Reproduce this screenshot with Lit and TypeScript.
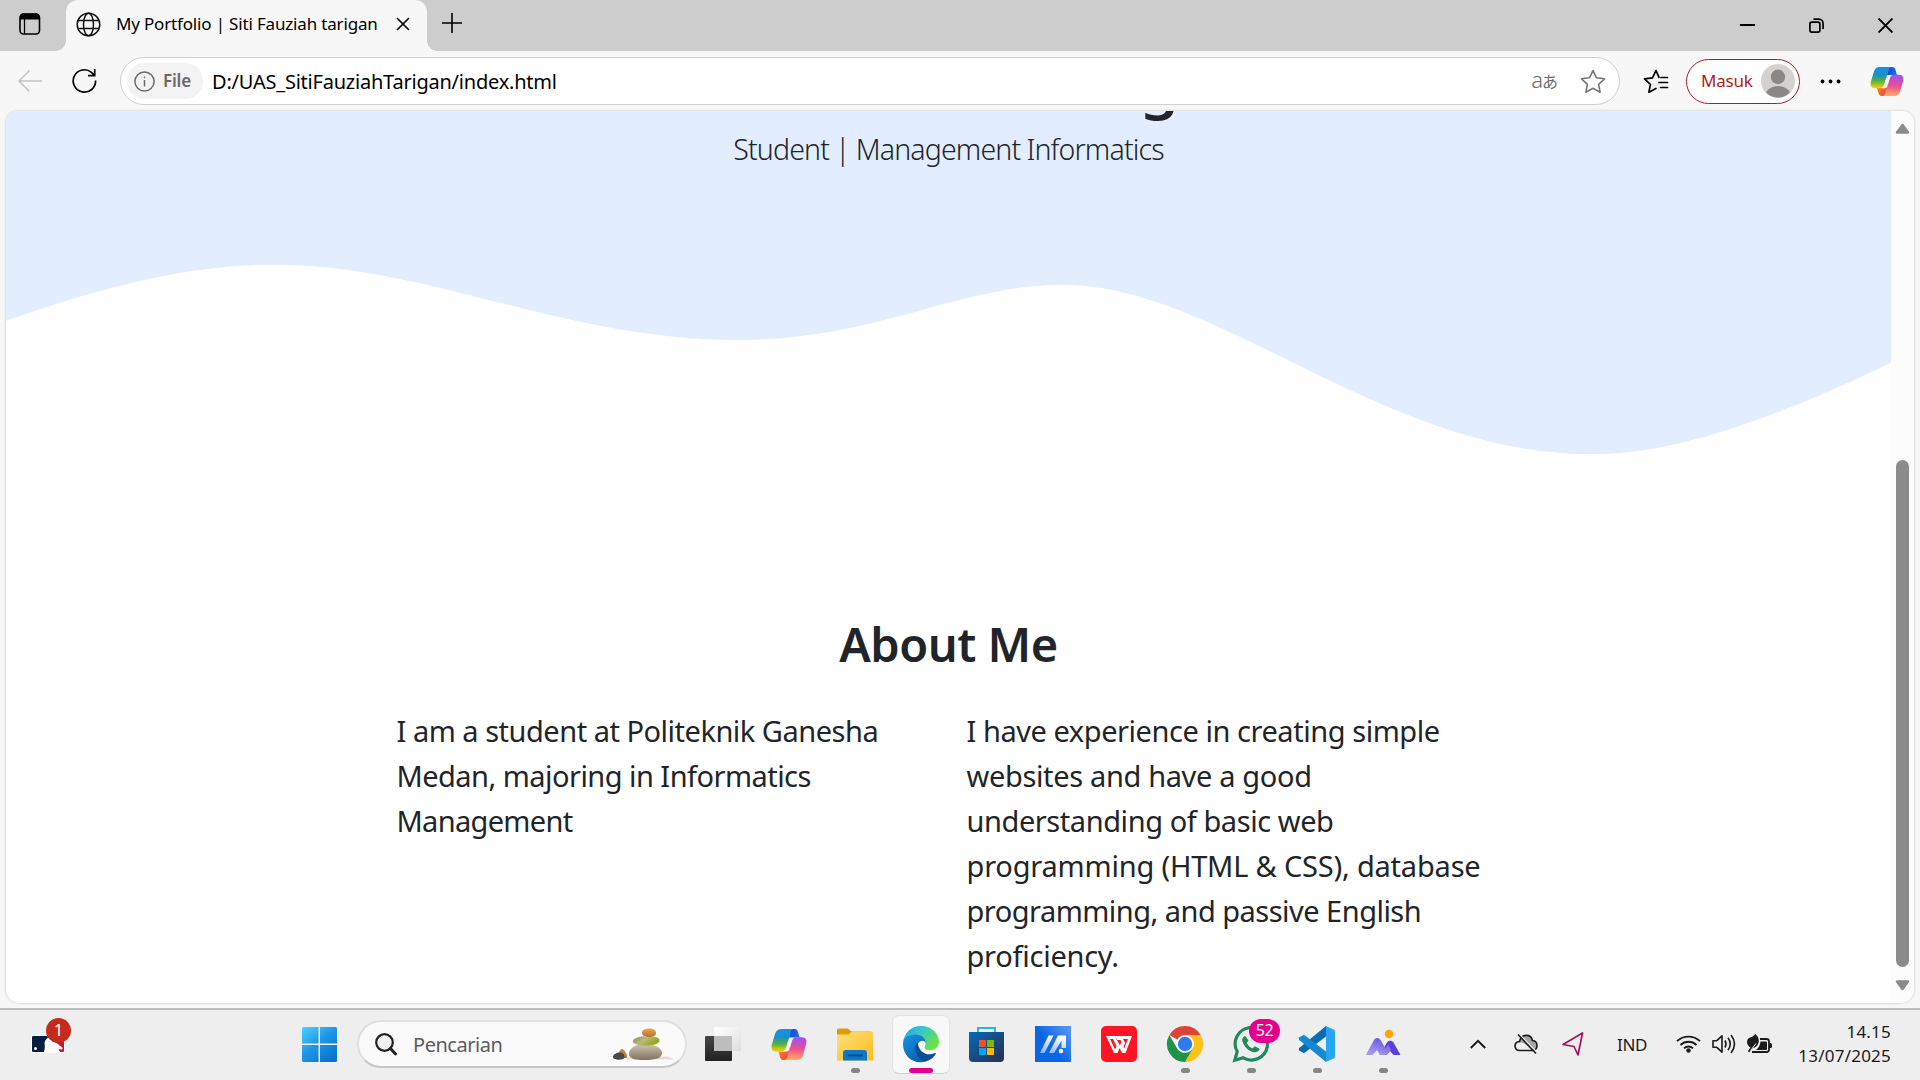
import { LitElement, html, css, svg } from "lit";
import { customElement } from "lit/decorators.js";

const BIO_LEFT: [string, number][] = [
  ["I am a student at Politeknik Ganesha", -0.49],
  ["Medan, majoring in Informatics", -0.54],
  ["Management", -0.69],
];
const BIO_RIGHT: [string, number][] = [
  ["I have experience in creating simple", -0.45],
  ["websites and have a good", -0.35],
  ["understanding of basic web", -0.43],
  ["programming (HTML & CSS), database", -0.2],
  ["programming, and passive English", -0.52],
  ["proficiency.", -0.25],
];

const copilot = (id: string) => svg`
  <defs>
    <linearGradient id="${id}a" x1="0" y1="0" x2="0" y2="1"><stop offset="0" stop-color="#1b8fe8"/><stop offset=".35" stop-color="#1590cf"/><stop offset=".65" stop-color="#52b03f"/><stop offset="1" stop-color="#ffd400"/></linearGradient>
    <linearGradient id="${id}b" x1="0.3" y1="0" x2="0.2" y2="1"><stop offset="0" stop-color="#a44ff0"/><stop offset=".5" stop-color="#ee4f8e"/><stop offset="1" stop-color="#ffb35c"/></linearGradient>
    <linearGradient id="${id}c" x1="0" y1="0" x2="1" y2="0.4"><stop offset="0" stop-color="#1a3fd0"/><stop offset="1" stop-color="#1c6fe0"/></linearGradient>
    <linearGradient id="${id}d" x1="0" y1="0" x2="1" y2="1"><stop offset="0" stop-color="#ff8a3c"/><stop offset="1" stop-color="#e83e2e"/></linearGradient>
  </defs>
  <path d="M20 1h3.500c2 0 3 1.300 3.500 3l1.600 5.500H24c-2 0-3.200 1-3.800 3L17 13z" fill="url(#${id}c)"/>
  <path d="M16 32h-3.500c-2 0-3-1.300-3.500-3l-1.600-5.500H12c2 0 3.200-1 3.800-3L19 20z" fill="url(#${id}d)"/>
  <path d="M10.500 1h12.300c-1.800.3-2.700 1.700-3.300 3.800l-4.400 15c-.7 2.400-2 3.900-4.400 3.900H5c-3.800 0-5.300-2.900-4.100-7.100l3.200-10.800C5.100 2.500 7.200 1 10.500 1z" fill="url(#${id}a)"/>
  <path d="M25.500 32H13.200c1.800-.3 2.700-1.700 3.300-3.800l4.400-15c.7-2.400 2-3.900 4.400-3.900H31c3.800 0 5.300 2.900 4.100 7.100l-3.200 10.800c-1 3.300-3.100 4.800-6.400 4.800z" fill="url(#${id}b)"/>
  <path d="M18.300 9.500h5.200c-1.500.5-2.200 1.700-2.700 3.300l-2.600 8.800c-.4 1.300-1 2-2.300 2h-4.200c1.500-.5 2.700-1.700 3.200-3.300z" fill="#f4f4f6"/>`;

@customElement("browser-tabs")
class BrowserTabs extends LitElement {
  static styles = css`
    :host { display: flex; height: 51px; background: #cdcdcd; color: #000; }
    svg { display: block; flex: none; }
    .work { padding: 13px 25px 0 19px; }
    .tab { position: relative; display: flex; align-items: center; width: 361px; height: 51px; box-sizing: border-box; padding: 0 17px 3px 10px; background: #f7f7f7; border-radius: 12px 12px 0 0; }
    .tab::before, .tab::after { content: ""; position: absolute; bottom: 0; width: 10px; height: 10px; }
    .tab::before { left: -10px; background: radial-gradient(circle at 0 0, transparent 9.500px, #f7f7f7 10px); }
    .tab::after { right: -10px; background: radial-gradient(circle at 100% 0, transparent 9.500px, #f7f7f7 10px); }
    .title { margin: 0 0 2px 15px; flex: 1; font-size: 17px; letter-spacing: -0.17px; white-space: nowrap; }
    .plus { padding: 12px 0 0 14px; flex: 1; }
    .win { display: flex; gap: 54px; padding: 18px 27px 0 0; }
  `;
  render() {
    return html`
      <div class="work"><svg width="22" height="22" viewBox="0 0 22 22"><rect x="1" y="1" width="19.500" height="20" rx="3.500" fill="none" stroke="#000" stroke-width="1.600"/><path d="M1 6.500V4a3.500 3.500 0 0 1 3.500-3.500h12.500A3.500 3.500 0 0 1 20.500 4v2.500z"/><path d="M5.500 6v15" stroke="#000" stroke-width="1.300"/></svg></div>
      <div class="tab">
        <svg width="25" height="25" viewBox="0 0 25 25" fill="none" stroke="#111" stroke-width="1.500"><circle cx="12.500" cy="12.500" r="11.300"/><ellipse cx="12.500" cy="12.500" rx="5" ry="11.300"/><path d="M2.200 8.500h20.600M2.200 16.500h20.600"/></svg>
        <span class="title">My Portfolio | Siti Fauziah tarigan</span>
        <svg width="14" height="14" viewBox="0 0 14 14" stroke="#000" stroke-width="1.600"><path d="M1 1l12 12M13 1L1 13"/></svg>
      </div>
      <div class="plus"><svg width="22" height="22" viewBox="0 0 22 22" stroke="#000" stroke-width="1.600"><path d="M11 1v20M1 11h20"/></svg></div>
      <div class="win">
        <svg width="15" height="15" viewBox="0 0 15 15" stroke="#000" stroke-width="2"><path d="M0 7h15"/></svg>
        <svg width="15" height="15" viewBox="0 0 15 15" fill="none" stroke="#000" stroke-width="1.700"><rect x=".9" y="4.200" width="10" height="10" rx="2"/><path d="M4.500 1.200h5.300a4.300 4.300 0 0 1 4.300 4.300v5.500"/></svg>
        <svg width="15" height="15" viewBox="0 0 15 15" stroke="#000" stroke-width="1.900"><path d="M.5 .5l14 14M14.500 .5l-14 14"/></svg>
      </div>`;
  }
}

@customElement("address-bar")
class AddressBar extends LitElement {
  static styles = css`
    :host { display: flex; height: 60px; box-sizing: border-box; align-items: center; padding: 0 16px 0 17px; background: #f7f7f7; }
    svg { display: block; flex: none; }
    .reload { margin: 0 23px 0 29px; }
    .bar { display: flex; align-items: center; width: 1500px; height: 48px; box-sizing: border-box; border: 1.500px solid #d0d0d0; border-radius: 24px; background: #fff; padding: 0 13px 0 6px; flex: none; }
    .chip { display: flex; align-items: center; gap: 8px; width: 76px; height: 36px; box-sizing: border-box; padding-left: 7px; border-radius: 18px; background: #f3f3f3; color: #6a6a6a; font-size: 17px; font-weight: 600; letter-spacing: -0.2px; }
    .chip span { margin-bottom: 1px; }
    .url { flex: 1; margin-left: 9px; font-size: 20px; letter-spacing: -0.22px; color: #000; }
    .lang { font-size: 22px; line-height: 24px; font-weight: 300; color: #6a6a6a; display: flex; align-items: center; margin: 0 22px 4px 0; }
    .kana { font-size: 16px; font-weight: 400; font-family: "Noto Sans CJK JP", sans-serif; margin-top: 3px; margin-left: -1px; }
    .fav { margin: 0 17px 0 23px; }
    .login { display: flex; align-items: center; justify-content: space-between; width: 114px; height: 45px; box-sizing: border-box; border: 1.500px solid #b01b22; border-radius: 23px; padding: 0 4px 0 14px; background: #fff; color: #b01b22; font-size: 17px; letter-spacing: -0.2px; }
    .login span { margin-bottom: 2px; }
    .dots { margin: 0 29px 0 20px; }
  `;
  render() {
    return html`
      <svg width="26" height="24" viewBox="0 0 26 24" fill="none" stroke="#c4c4c4" stroke-width="1.500"><path d="M25 12H2M12.500 1.500L2 12l10.500 10.500"/></svg>
      <svg class="reload" width="25" height="26" viewBox="0 0 25 26" fill="none" stroke="#000" stroke-width="1.700"><path d="M23.600 12.500A11.200 11.200 0 1 1 19.500 4.300l3 3M22.700 1v6.700H16"/></svg>
      <div class="bar">
        <div class="chip">
          <svg width="21" height="21" viewBox="0 0 21 21" fill="none" stroke="#6a6a6a" stroke-width="1.500"><circle cx="10.500" cy="10.500" r="9.600"/><path d="M10.500 9v6.500"/><circle cx="10.500" cy="6.300" r=".6" fill="#6a6a6a" stroke-width=".6"/></svg>
          <span>File</span>
        </div>
        <span class="url">D:/UAS_SitiFauziahTarigan/index.html</span>
        <span class="lang">a<span class="kana">あ</span></span>
        <svg width="26" height="25" viewBox="0 0 26 25" fill="none" stroke="#767676" stroke-width="1.600" stroke-linejoin="round"><path d="M13 1.500l3.500 7.300 8 1-5.900 5.500 1.500 7.900-7.100-3.900-7.100 3.900 1.500-7.900L1.500 9.800l8-1z"/></svg>
      </div>
      <svg class="fav" width="26" height="25" viewBox="0 0 26 25" fill="none" stroke="#000" stroke-width="1.700" stroke-linejoin="round" stroke-linecap="round"><path d="M16 8.300L13 1.500 9.500 8.800l-8 1 5.900 5.500-1.500 7.900 7-3.800M18 8.500h6.500M16 13.500h8.500M17.500 18.500h7"/></svg>
      <div class="login"><span>Masuk</span>
        <svg width="34" height="34" viewBox="0 0 34 34"><defs><clipPath id="av"><circle cx="17" cy="17" r="16.500"/></clipPath></defs><circle cx="17" cy="17" r="17" fill="#d4d2d0"/><circle cx="17" cy="12.800" r="7.200" fill="#8b8785"/><ellipse cx="17" cy="31" rx="12.500" ry="9" fill="#8b8785" clip-path="url(#av)"/></svg>
      </div>
      <svg class="dots" width="21" height="5" viewBox="0 0 21 5"><circle cx="2.500" cy="2.500" r="1.900"/><circle cx="10.500" cy="2.500" r="1.900"/><circle cx="18.500" cy="2.500" r="1.900"/></svg>
      <svg width="34" height="31" viewBox="0 0 36 33">${copilot("t")}</svg>`;
  }
}

@customElement("portfolio-page")
class PortfolioPage extends LitElement {
  static styles = css`
    :host { display: flex; height: 892px; margin: 0 6px; overflow: hidden; border-radius: 12px 12px 14px 14px; background: #fff; box-shadow: 0 0 2px 1px #dedede; color: #212529; }
    .page { width: 1885px; overflow: hidden; }
    .hero { background: #e2edff; text-align: center; }
    h1, h2, p { margin: 0; }
    h1 { font-size: 64px; line-height: 72px; font-weight: 500; margin-top: -65px; letter-spacing: 1px; padding-left: 10px; }
    .lead { font-size: 28.500px; line-height: 42px; height: 122px; font-weight: 310; letter-spacing: -0.85px; padding-top: 10px; box-sizing: border-box; word-spacing: -0.5px; }
    .wave { display: block; width: 1885px; height: 230px; }
    .about { padding-top: 145px; }
    h2 { font-size: 47px; line-height: 58px; font-weight: 590; letter-spacing: -0.5px; text-align: center; }
    .cols { display: grid; grid-template-columns: 570px 570px; width: 1140px; margin: 35px auto 0; }
    p { padding: 0 18px; font-size: 29px; line-height: 45px; font-weight: 375; }
    .line { display: block; white-space: nowrap; }
    .scroll { display: flex; flex-direction: column; align-items: center; width: 23px; background: #fcfcfc; padding: 12px 0; box-sizing: border-box; }
    .track { flex: 1; display: flex; align-items: flex-end; padding-bottom: 13px; }
    .thumb { width: 13px; height: 507px; border-radius: 7px; background: #8b8b8b; }
    .scroll svg { display: block; }
  `;
  private lines(rows: [string, number][]) {
    return html`<p>${rows.map(([text, tracking]) => html`<span class="line" style="letter-spacing:${tracking}px">${text}</span>`)}</p>`;
  }
  render() {
    return html`
      <div class="page">
        <div class="hero">
          <h1>Siti Fauziah Tarigan</h1>
          <div class="lead">Student | Management Informatics</div>
          <svg class="wave" viewBox="5 0 1539 690" preserveAspectRatio="none"><path fill="#fff" d="M5 242C80 147 150 74 225 74C350 74 459 300 602 300C716 300 782 134 868 134C995 134 1128 643 1300 643C1375 643 1464 508 1544 368V691H5z"/></svg>
        </div>
        <div class="about">
          <h2>About Me</h2>
          <div class="cols">${this.lines(BIO_LEFT)}${this.lines(BIO_RIGHT)}</div>
        </div>
      </div>
      <div class="scroll">
        <svg width="15" height="11" viewBox="0 0 15 11"><path d="M7.500 2L13 9.500H2z" fill="#8b8b8b" stroke="#8b8b8b" stroke-width="2.500" stroke-linejoin="round"/></svg>
        <div class="track"><div class="thumb"></div></div>
        <svg width="15" height="11" viewBox="0 0 15 11"><path d="M7.500 9L13 1.500H2z" fill="#8b8b8b" stroke="#8b8b8b" stroke-width="2.500" stroke-linejoin="round"/></svg>
      </div>`;
  }
}

@customElement("task-bar")
class TaskBar extends LitElement {
  static styles = css`
    :host { display: flex; height: 72px; box-sizing: border-box; border-top: 2px solid #bcbcbc; background: #eee; color: #1b1b1b; align-items: center; padding-bottom: 2px; }
    svg { display: block; flex: none; overflow: visible; }
    .news { position: relative; margin: -1px 237px 0 31px; }
    .badge { position: absolute; left: 15px; top: -17px; width: 25px; height: 25px; border-radius: 50%; background: #c42b1c; color: #fff; font-size: 16px; line-height: 25px; text-align: center; }
    .search { display: flex; align-items: center; width: 330px; height: 48px; box-sizing: border-box; margin: 0 3px 0 20px; padding: 0 10px 0 16px; border: 2px solid #dfdfdf; border-bottom-color: #c6c6c6; border-radius: 24px; background: #fafafa; font-size: 20px; letter-spacing: -0.47px; color: #5c5c5c; }
    .search span { flex: 1; padding-left: 16px; }
    .cell { position: relative; display: flex; align-items: center; justify-content: center; width: 66px; height: 68px; }
    .on::before { content: ""; position: absolute; left: 4px; top: 5px; width: 58px; height: 59px; box-sizing: border-box; background: #f8f8f8; border: 1.500px solid #e3e3e3; border-bottom-color: #d0d0d0; border-radius: 7px; }
    .on svg { position: relative; }
    .run::after { content: ""; position: absolute; left: 28.500px; bottom: 5px; width: 9px; height: 5px; border-radius: 3px; background: #868686; }
    .on::after { left: 21px; width: 24px; background: #e3008c; }
    .store { padding-right: 1px; box-sizing: border-box; }
    .count { position: absolute; left: 31px; top: 9px; width: 31px; height: 24px; border-radius: 12px; background: #e3008c; color: #fff; font-size: 16px; line-height: 23px; text-align: center; letter-spacing: -0.5px; }
    .tray { display: flex; align-items: center; margin-left: auto; padding-right: 29px; }
    .cloud { margin-left: 28px; }
    .nav { margin-left: 24px; }
    .vol, .bat { margin-left: 11px; }
    .lang { margin: 0 29px 0 33px; font-size: 17px; letter-spacing: -0.4px; }
    .clock { width: 119px; text-align: right; font-size: 17px; line-height: 24px; letter-spacing: 0.22px; }
  `;
  render() {
    return html`
      <div class="news">
        <svg width="34" height="18" viewBox="0 0 34 18"><rect width="34" height="18" rx="2" fill="#fff"/><path d="M2 1h14v16H2a1 1 0 0 1-1-1V2a1 1 0 0 1 1-1z" fill="#041e42"/><path d="M16 1h16a1 1 0 0 1 1 1v14a1 1 0 0 1-1 1H16z" fill="#c8103e"/><path d="M13 17c1-4 1-6 .500-9 .5-3 2-5 4.500-5 2 0 3 1.500 3 3.500 3 .5 6 2 8 4.500 1.500.5 3 1.500 2.500 3-1 .8-3 0-4 .500L29 17z" fill="#fff"/><circle cx="4.500" cy="13.500" r="1.500" fill="#fff"/></svg>
        <div class="badge">1</div>
      </div>
      <svg width="35" height="35" viewBox="0 0 35 35"><defs><linearGradient id="w" gradientUnits="userSpaceOnUse" x1="0" y1="0" x2="28" y2="34"><stop offset="0" stop-color="#4cd2ff"/><stop offset=".5" stop-color="#1f97e6"/><stop offset="1" stop-color="#0873d0"/></linearGradient></defs><path d="M1.500 0h15v16.500H0V1.500A1.500 1.500 0 0 1 1.500 0zM18 0h15.500A1.500 1.500 0 0 1 35 1.500v15H18zM0 18h16.500v17h-15A1.500 1.500 0 0 1 0 33.500zM18 18h17v15.500a1.500 1.500 0 0 1-1.500 1.500H18z" fill="url(#w)"/></svg>
      <div class="search">
        <svg width="22" height="23" viewBox="0 0 22 23" fill="#eef0f2" stroke="#222" stroke-width="2.200"><circle cx="9.500" cy="9.500" r="8.300"/><path d="M15.500 15.500l5 5.500" stroke-width="3" stroke-linecap="round"/></svg>
        <span>Pencarian</span>
        <svg width="62" height="33" viewBox="0 0 62 33"><defs>
          <linearGradient id="s1" x1="0" y1="0" x2="0" y2="1"><stop offset="0" stop-color="#cfc5b0"/><stop offset="1" stop-color="#7d7361"/></linearGradient>
          <linearGradient id="s2" x1="0" y1="0" x2="1" y2="0.500"><stop offset="0" stop-color="#8d8f55"/><stop offset=".5" stop-color="#b7bb7a"/><stop offset="1" stop-color="#93a511"/></linearGradient>
          <linearGradient id="s3" x1="0" y1="0" x2="0" y2="1"><stop offset="0" stop-color="#e2a75a"/><stop offset="1" stop-color="#b97320"/></linearGradient></defs>
          <path d="M14 31.500h48l-8-3-40 1z" fill="#d9cfc6" opacity=".7"/>
          <path d="M4 30c1-4 3-9 5-9s6 6 5 9z" fill="#bf8434"/><path d="M0 29c0-3 4-4.500 7-4.500s5 2 4.500 5-11.500 3-11.500-.5z" fill="#47494c"/>
          <path d="M16 26c0-6 7-10 15-10 11 0 18 4 18 9 0 5-6 7-17 7-9 0-16-1-16-6z" fill="url(#s1)"/>
          <path d="M20 12.500C22 9 28 8 33 8.500c7 0 13 0 13.500 3.500S41 17 35 17.500c-6 .5-17-1-15-5z" fill="url(#s2)"/>
          <path d="M29 4.500C29 1.500 33 .5 36.500.5S43 2 43 5s-3 4-7 4-7-1.500-7-4.500z" fill="url(#s3)"/></svg>
      </div>
      <div class="cell"><svg width="36" height="34" viewBox="0 0 36 34"><defs><linearGradient id="tv" x1="0" y1="0" x2="1" y2="1"><stop offset="0" stop-color="#fff"/><stop offset="1" stop-color="#dedede"/></linearGradient><linearGradient id="tk" x1="0" y1="0" x2="0" y2="1"><stop offset="0" stop-color="#454545"/><stop offset="1" stop-color="#222"/></linearGradient></defs><rect x="0" y="9" width="27" height="25" rx="1" fill="url(#tk)"/><rect x="9" y="0" width="27" height="24" rx="1" fill="url(#tv)"/><path d="M9 9h18v15H9z" fill="#bdbdbd"/></svg></div>
      <div class="cell"><svg width="36" height="33" viewBox="0 0 36 33">${copilot("b")}</svg></div>
      <div class="cell run"><svg width="36" height="33" viewBox="0 0 36 33"><defs><linearGradient id="fo" x1="0" y1="0" x2="1" y2="1"><stop offset="0" stop-color="#ffdf78"/><stop offset="1" stop-color="#fcbd22"/></linearGradient></defs><path d="M0 2a1.500 1.500 0 0 1 1.500-1.500h9L14.500 3.500H34v8H0z" fill="#dd9a0b"/><path d="M0 6.500h11.500l3.500-3h19.500A1.500 1.500 0 0 1 36 5v27.500H0z" fill="url(#fo)"/><path d="M6 32.500V25a3 3 0 0 1 3-3h18a3 3 0 0 1 3 3v7.500z" fill="#0f76c8"/><path d="M11 27.500h14" stroke="#0a4e93" stroke-width="1.800" stroke-linecap="round"/></svg></div>
      <div class="cell run on"><svg width="36" height="36" viewBox="0 0 36 36"><defs>
        <linearGradient id="e1" x1="0" y1="0" x2="1" y2="0.600"><stop offset="0" stop-color="#1e9de0"/><stop offset=".4" stop-color="#35c1d8"/><stop offset="1" stop-color="#6be441"/></linearGradient>
        <linearGradient id="e2" x1="0" y1="0" x2="0.600" y2="1"><stop offset="0" stop-color="#1a94dd"/><stop offset="1" stop-color="#0862b5"/></linearGradient></defs>
        <path d="M0 17C1 7 8 0 18 0c11 0 18 8 18 15.500 0 5.500-4 8.800-9 8.800-3.500 0-5.500-1.500-5.500-2.800 0-1 1-1.500 1-4 0-4-4-8-9.500-8C6 9.500 1 13 0 17z" fill="url(#e1)"/>
        <path d="M0 18C0 12 5 8.500 12 8.500c7 0 10.500 4 10.500 8 0 0-2.500-3-5.500-1-6 4-3 14 6 20C10 39 0 30 0 18z" fill="url(#e2)"/>
        <path d="M14.500 16c-4 4-2.500 12 2 16.500 3 2.500 6 3 7 2.800 4-1.300 7.500-4 9.300-7.300.3-.7-.2-1.300-1-.9-8 3.500-16-.5-17.300-11.100z" fill="#0c4f98"/></svg></div>
      <div class="cell store"><svg width="35" height="35" viewBox="0 0 35 35"><defs><linearGradient id="st" x1="0" y1="0" x2="1" y2="1"><stop offset="0" stop-color="#0869b5"/><stop offset="1" stop-color="#272f52"/></linearGradient></defs><path d="M9 7V1h17v6" fill="none" stroke="#29b4e8" stroke-width="2"/><path d="M0 5h35v26a4 4 0 0 1-4 4H4a4 4 0 0 1-4-4z" fill="url(#st)"/><path d="M10 13h7v7h-7z" fill="#f25022"/><path d="M18 13h7v7h-7z" fill="#7fba00"/><path d="M10 21h7v7h-7z" fill="#00a4ef"/><path d="M18 21h7v7h-7z" fill="#ffb900"/></svg></div>
      <div class="cell"><svg width="36" height="36" viewBox="0 0 36 36"><defs><linearGradient id="am" x1="1" y1="0" x2="0.400" y2="0.500"><stop offset="0" stop-color="#5b9cf5"/><stop offset="1" stop-color="#0b66e4"/></linearGradient><linearGradient id="al" x1="0" y1="1" x2="0.300" y2="0"><stop offset="0" stop-color="#7db4fa"/><stop offset="1" stop-color="#fff"/></linearGradient></defs><rect width="36" height="36" fill="url(#am)"/><path d="M5 27L13.500 9.500h5L9.500 27zM14 27l9-17.500h8V22h-4.500v-7.500L19 27z" fill="url(#al)"/><circle cx="26" cy="25" r="2.200" fill="#fff"/></svg></div>
      <div class="cell"><svg width="36" height="36" viewBox="0 0 36 36"><rect width="36" height="36" rx="5" fill="#ff1523"/><path d="M5 10h9l4.800 9.500 1.700-3.500-1-2h-4l-1.500-4H31l-6.500 17h-3.500l-2.500-5-2 5H13zM9 13l5 10.500 1.500-3.500-3.500-7zM22 13l2.200 4-1.700 4 .7 1.500L27 13z" fill="#fff" fill-rule="evenodd"/></svg></div>
      <div class="cell run"><svg width="36" height="36" viewBox="0 0 36 36"><path d="M18 18L2.410 9A18 18 0 0 1 33.600 9H18z" fill="#dc4437"/><path d="M18 9h15.600A18 18 0 0 1 18 36l7.800-13.500z" fill="#fbc116"/><path d="M25.800 22.500L18 36A18 18 0 0 1 2.410 9l7.800 13.500z" fill="#1f9348"/><circle cx="18" cy="18" r="9" fill="#fff"/><circle cx="18" cy="18" r="7.200" fill="#2f7bed"/></svg></div>
      <div class="cell run"><svg width="36" height="36" viewBox="0 0 36 36"><path d="M1.800 34.200l2.400-8.600A16.200 16.200 0 1 1 10.300 31.800z" fill="none" stroke="#1d8a58" stroke-width="3.200"/><path d="M12.200 10c-2 .5-3.500 3-2.700 5.500C11.200 20.800 15.500 25 21 26.300c2.700.4 5.300-1.200 5.500-3.500l-4.700-2.600-2.300 2.200c-2.600-1-4.800-3-5.800-5.600l1.900-2.300z" fill="#1d8a58"/></svg><div class="count">52</div></div>
      <div class="cell run"><svg width="36" height="36" viewBox="0 0 36 36"><path d="M27 0v10.500L5 27.300 0 24.500c-.5-1-.3-2 .5-2.700z" fill="#0b6cb3"/><path d="M27 36V25.500L5 8.700 0 11.500c-.5 1-.3 2 .5 2.700z" fill="#1789d0"/><path d="M27 0l8 3.800a2 2 0 0 1 1 1.800v24.800a2 2 0 0 1-1 1.800L27 36z" fill="#27a5f0"/></svg></div>
      <div class="cell run"><svg width="36" height="36" viewBox="0 0 36 36"><defs><linearGradient id="m1" x1="0" y1="1" x2="0.500" y2="0"><stop offset="0" stop-color="#b0a6f5"/><stop offset="1" stop-color="#6b5be0"/></linearGradient></defs><path d="M14.500 29L22 16.500c1.500-2.500 5-2.500 6.500 0L35.500 29h-7l-3.500-4-3.500 4z" fill="#5a3fe0"/><path d="M.8 29L9 14c1.500-2.700 5-2.700 6.500 0l5 8.500 2.500-4.500 3 6-4.500 5h-6.500L12 24l-4.500 5z" fill="url(#m1)"/><circle cx="24" cy="8" r="4.200" fill="#ffa400"/></svg></div>
      <div class="tray">
        <svg width="16" height="10" viewBox="0 0 16 10" fill="none" stroke="#1b1b1b" stroke-width="2"><path d="M.8 9L8 1.800 15.200 9"/></svg>
        <svg class="cloud" width="24" height="20" viewBox="0 0 24 20"><path d="M6 16.500C-.5 16.500-.5 8 5.500 7.500 7-.5 17-.5 18.500 6.500c6 .5 6 10 0 10z" fill="#a6a6a6"/><path d="M6 16.500C1 16.500-.5 9.500 5 8.500c4-.5 6 1 7.500 3l6 5z" fill="#efefef"/><path d="M6 16.500C-.5 16.500-.5 8 5.500 7.500 7-.5 17-.5 18.500 6.500c6 .5 6 10 0 10z" fill="none" stroke="#1b1b1b" stroke-width="1.600"/><path d="M5.500 .5L23 18.500" stroke="#eee" stroke-width="1.600"/><path d="M4 .5L22 19.500" stroke="#1b1b1b" stroke-width="1.600"/></svg>
        <svg class="nav" width="22" height="24" viewBox="0 0 22 24" fill="none" stroke="#a8105c" stroke-width="1.700" stroke-linejoin="round"><path d="M20.500 1L16 23l-4-8.500L1 12.500z"/></svg>
        <span class="lang">IND</span>
        <svg width="25" height="18" viewBox="0 0 25 18" fill="none" stroke="#1b1b1b" stroke-width="1.800"><path d="M1 6.200a16.500 16.500 0 0 1 23 0M4.500 10a11.500 11.500 0 0 1 16 0M8 13.300a6.500 6.500 0 0 1 9 0"/><circle cx="12.500" cy="15.500" r="2.200" fill="#1b1b1b" stroke="none"/></svg>
        <svg class="vol" width="24" height="20" viewBox="0 0 24 20" fill="none" stroke="#1b1b1b" stroke-width="1.600" stroke-linejoin="round"><path d="M1 6.800h3.500L10 1.800v16.400l-5.500-5H1zM13 6.500q2 3.500 0 7M16 3.700q4.500 6.300 0 12.600M19 1q7 9 0 18"/></svg>
        <svg class="bat" width="25" height="20" viewBox="0 0 25 20"><path d="M13 5h6.500a2.500 2.500 0 0 1 2.500 2.500v8a2.500 2.500 0 0 1-2.500 2.500H5" fill="none" stroke="#1b1b1b" stroke-width="1.800"/><path d="M22 9h1.500a1.500 1.500 0 0 1 1.500 1.500v2a1.500 1.500 0 0 1-1.500 1.500H22zM13.500 7.500H19q1 0 1 1v6.500q0 1-1 1H9q4-3 4.500-8.500z" fill="#1b1b1b"/><path d="M8 0c3 2 4.500 5 3.500 9-1 3-3 4.500-5.500 5l-4 4.500L1 17l2.500-3.500C-1 11-1 5 3 3.500 5.500 3 7 2 8 0z" fill="#1b1b1b"/><path d="M3.500 16.500L9 9.500" stroke="#eee" stroke-width="1"/></svg>
        <div class="clock">14.15<br />13/07/2025</div>
      </div>`;
  }
}

@customElement("app-root")
class AppRoot extends LitElement {
  static styles = css`
    :host { display: flex; flex-direction: column; width: 1920px; height: 1080px; overflow: hidden; background: #f7f7f7; font-family: "Noto Sans", "Open Sans", sans-serif; font-weight: 375; }
    .grow { flex: 1; }
  `;
  render() {
    return html`<browser-tabs></browser-tabs><address-bar></address-bar><portfolio-page></portfolio-page><div class="grow"></div><task-bar></task-bar>`;
  }
}
